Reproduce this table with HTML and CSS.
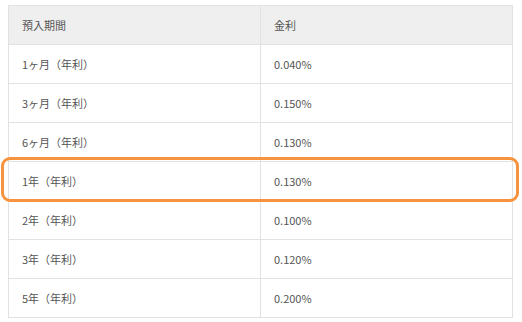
FILE: index.html
```html
<!DOCTYPE html>
<html lang="ja">
<head>
<meta charset="utf-8">
<link rel="stylesheet" href="styles.css">
</head>
<body>
<div class="wrap">
  <table class="rates">
    <thead>
      <tr><th>預入期間</th><th>金利</th></tr>
    </thead>
    <tbody>
      <tr><td>1ヶ月（年利）</td><td>0.040%</td></tr>
      <tr><td>3ヶ月（年利）</td><td>0.150%</td></tr>
      <tr><td>6ヶ月（年利）</td><td>0.130%</td></tr>
      <tr><td>1年（年利）</td><td>0.130%</td></tr>
      <tr><td>2年（年利）</td><td>0.100%</td></tr>
      <tr><td>3年（年利）</td><td>0.120%</td></tr>
      <tr><td>5年（年利）</td><td>0.200%</td></tr>
    </tbody>
  </table>
  <div class="highlight"></div>
</div>
</body>
</html>
```
FILE: styles.css
```css
html, body {
  margin: 0;
  padding: 0;
  background: #fff;
}
body {
  padding: 5px 9px 0 8px;
  font-family: "Noto Sans CJK JP", "Noto Sans", sans-serif;
  font-size: 11px;
  color: #555;
}
.wrap {
  position: relative;
  width: 505px;
}
.rates {
  width: 505px;
  border-collapse: collapse;
  table-layout: fixed;
}
.rates th,
.rates td {
  height: 38px;
  padding: 0 0 0 13px;
  text-align: left;
  font-weight: normal;
  border: 1px solid #e2e2e2;
  line-height: 16px;
  vertical-align: middle;
}
.rates th:first-child,
.rates td:first-child {
  width: 238px;
}
.rates thead th {
  background: #efefef;
}
.rates td:last-child,
.rates th:last-child {
  padding-left: 13px;
}
.highlight {
  position: absolute;
  left: -7px;
  top: 152px;
  width: 512px;
  height: 39px;
  border: 3px solid #f7923e;
  border-radius: 9px;
}
```
